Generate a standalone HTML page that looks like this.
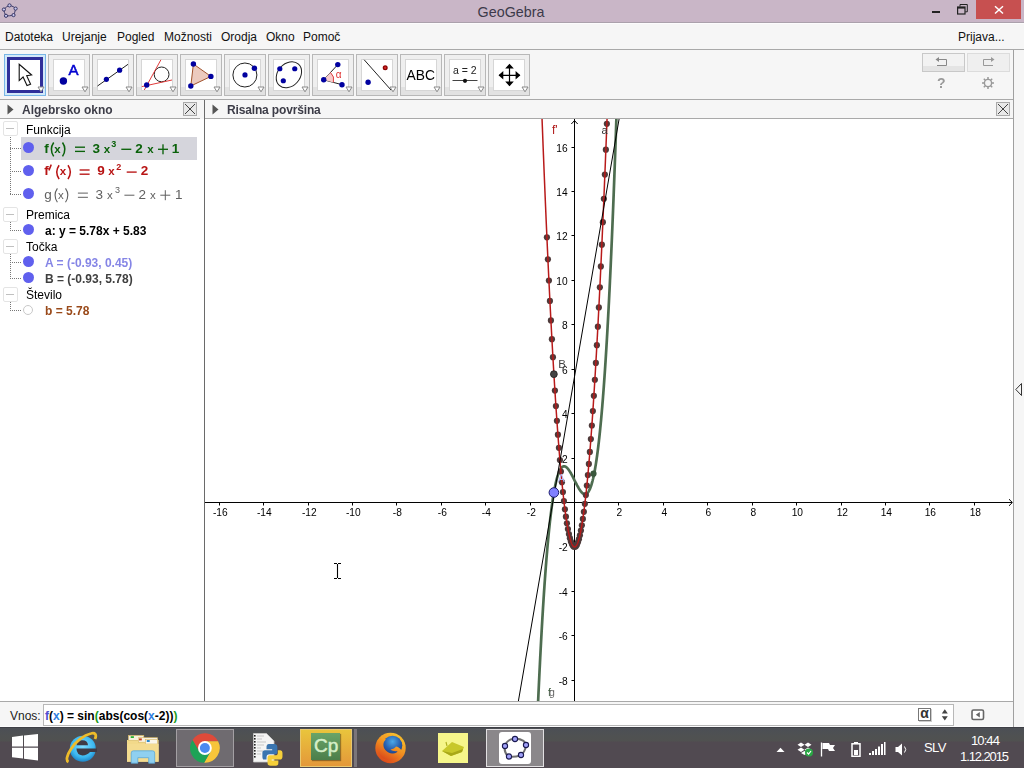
<!DOCTYPE html>
<html><head><meta charset="utf-8"><style>
html,body{margin:0;padding:0;width:1024px;height:768px;overflow:hidden;background:#f6f6f6;font-family:"Liberation Sans",sans-serif;}
div{box-sizing:content-box}
.a{position:absolute}
</style></head><body><div style="position:absolute;left:0;top:0;width:1024px;height:768px;overflow:hidden;opacity:0.999">
<!-- title bar -->
<div class="a" style="left:0;top:0;width:1024px;height:22px;background:#c9b6c7"></div>
<svg class="a" style="left:0;top:0" width="20" height="20"><path d="M9.5,5.4 C12,6 14.5,7 15.6,8.6 C15.2,11 14.5,13.5 13.5,15.1 C11,15.8 8,16 6,15.8 C4.8,14 4,11.5 3.9,9.5 C5.5,7.5 7.5,6 9.5,5.4 Z" fill="none" stroke="#3a3a6a" stroke-width="1"/><g fill="#c8c8f0" stroke="#2a2a5a" stroke-width="0.9"><circle cx="9.5" cy="5.4" r="1.6"/><circle cx="15.6" cy="8.6" r="1.6"/><circle cx="13.5" cy="15.1" r="1.6"/><circle cx="6" cy="15.8" r="1.6"/><circle cx="3.9" cy="9.5" r="1.6"/></g></svg>
<div class="a" style="left:-1px;top:4px;width:1024px;text-align:center;font-size:14.3px;color:#3c3a4a">GeoGebra</div>
<div class="a" style="left:932px;top:11px;width:8px;height:2px;background:#222"></div>
<svg class="a" style="left:957px;top:4px" width="11" height="11"><path d="M3,2.5 V0.5 H10.3 V7.8 H8.3" fill="none" stroke="#222" stroke-width="1"/><rect x="0.6" y="3" width="7.4" height="7" fill="none" stroke="#222" stroke-width="1.2"/><rect x="0.6" y="3" width="7.4" height="1.6" fill="#222"/></svg>
<div class="a" style="left:976px;top:0;width:45px;height:19px;background:#c75050"></div>
<svg class="a" style="left:994px;top:5px" width="10" height="10"><path d="M1,1.2 L9,8.5 M9,1.2 L1,8.5" stroke="#fff" stroke-width="1.5"/></svg>
<!-- menu -->
<div class="a" style="left:0;top:22px;width:1024px;height:27px;background:#f6f6f6"></div><div class="a" style="left:0;top:22px;width:1024px;height:1px;background:#aba1ac"></div><div class="a" style="left:0;top:23px;width:1024px;height:1px;background:#fdfcfd"></div>
<div class="a" style="left:0;top:49px;width:1024px;height:1px;background:#a9a9a9"></div>
<div class="a" style="left:5px;top:30px;font-size:12px;color:#111;white-space:nowrap;word-spacing:0">
<span class="a" style="left:0">Datoteka</span><span class="a" style="left:57px">Urejanje</span><span class="a" style="left:112px">Pogled</span><span class="a" style="left:159px">Možnosti</span><span class="a" style="left:216px">Orodja</span><span class="a" style="left:261px">Okno</span><span class="a" style="left:298px">Pomoč</span></div>
<div class="a" style="left:958px;top:30px;font-size:12px;color:#111">Prijava...</div>
<!-- toolbar -->
<div style="position:absolute;left:4px;top:54px;width:40px;height:40px;border:1px solid #78b6e6;background:#d2e9f9"></div>
<div style="position:absolute;left:7px;top:57px;width:30px;height:30px;border:3px solid #2f2f9a;background:#fff"></div>
<svg style="position:absolute;left:9px;top:59px" width="32" height="32"><path d="M10.2,5.3 L10.2,21.6 L14.1,18 L18,26.5 L21.6,25.2 L17.7,16.7 L22.6,16 Z" fill="#fff" stroke="#111" stroke-width="1.1" stroke-linejoin="miter"/></svg><svg style="position:absolute;left:37px;top:86px" width="8" height="7"><path d="M1,1 H7 L4,5.8 Z" fill="#fff" stroke="#8a8a8a" stroke-width="1"/></svg><div style="position:absolute;left:48px;top:54px;width:40px;height:40px;border:1px solid #b8b8b8;background:linear-gradient(#efefef 0,#efefef 32px,#e2e2e2 32px)"></div>
<div style="position:absolute;left:53px;top:59px;width:30px;height:30px;border:1px solid #d6d6d6;background:#fff"></div>
<svg style="position:absolute;left:53px;top:59px" width="32" height="32"><circle cx="10.4" cy="22" r="3.7" fill="#0000a0"/><text x="15.6" y="16" font-family="Liberation Sans" font-size="15" fill="#0000d0" stroke="#0000d0" stroke-width="0.55">A</text></svg><svg style="position:absolute;left:81px;top:86px" width="8" height="7"><path d="M1,1 H7 L4,5.8 Z" fill="#fff" stroke="#8a8a8a" stroke-width="1"/></svg><div style="position:absolute;left:92px;top:54px;width:40px;height:40px;border:1px solid #b8b8b8;background:linear-gradient(#efefef 0,#efefef 32px,#e2e2e2 32px)"></div>
<div style="position:absolute;left:97px;top:59px;width:30px;height:30px;border:1px solid #d6d6d6;background:#fff"></div>
<svg style="position:absolute;left:97px;top:59px" width="32" height="32"><path d="M0.5,27 L31,5.3" stroke="#222" stroke-width="1"/><circle cx="9.4" cy="20.3" r="2.6" fill="#0000a0"/><circle cx="22.6" cy="11.2" r="2.6" fill="#0000a0"/></svg><svg style="position:absolute;left:125px;top:86px" width="8" height="7"><path d="M1,1 H7 L4,5.8 Z" fill="#fff" stroke="#8a8a8a" stroke-width="1"/></svg><div style="position:absolute;left:136px;top:54px;width:40px;height:40px;border:1px solid #b8b8b8;background:linear-gradient(#efefef 0,#efefef 32px,#e2e2e2 32px)"></div>
<div style="position:absolute;left:141px;top:59px;width:30px;height:30px;border:1px solid #d6d6d6;background:#fff"></div>
<svg style="position:absolute;left:141px;top:59px" width="32" height="32"><circle cx="20.6" cy="15.4" r="7.4" fill="none" stroke="#222" stroke-width="1"/><path d="M3.3,31 L19.9,0.8" stroke="#e03a3a" stroke-width="1"/><path d="M0.8,27.6 L31,21" stroke="#e03a3a" stroke-width="1"/><circle cx="5.7" cy="26" r="2.7" fill="#0000a0"/></svg><svg style="position:absolute;left:169px;top:86px" width="8" height="7"><path d="M1,1 H7 L4,5.8 Z" fill="#fff" stroke="#8a8a8a" stroke-width="1"/></svg><div style="position:absolute;left:180px;top:54px;width:40px;height:40px;border:1px solid #b8b8b8;background:linear-gradient(#efefef 0,#efefef 32px,#e2e2e2 32px)"></div>
<div style="position:absolute;left:185px;top:59px;width:30px;height:30px;border:1px solid #d6d6d6;background:#fff"></div>
<svg style="position:absolute;left:185px;top:59px" width="32" height="32"><path d="M8.4,5 L25.9,17.4 L5.8,27 Z" fill="#eccabe" stroke="#a0522d" stroke-width="1"/><circle cx="8.4" cy="5" r="2.7" fill="#0000a0"/><circle cx="25.9" cy="17.4" r="2.7" fill="#0000a0"/><circle cx="5.8" cy="27" r="2.7" fill="#0000a0"/></svg><svg style="position:absolute;left:213px;top:86px" width="8" height="7"><path d="M1,1 H7 L4,5.8 Z" fill="#fff" stroke="#8a8a8a" stroke-width="1"/></svg><div style="position:absolute;left:224px;top:54px;width:40px;height:40px;border:1px solid #b8b8b8;background:linear-gradient(#efefef 0,#efefef 32px,#e2e2e2 32px)"></div>
<div style="position:absolute;left:229px;top:59px;width:30px;height:30px;border:1px solid #d6d6d6;background:#fff"></div>
<svg style="position:absolute;left:229px;top:59px" width="32" height="32"><circle cx="15.9" cy="16" r="12" fill="none" stroke="#222" stroke-width="1"/><circle cx="16" cy="15.9" r="2.6" fill="#0000a0"/><circle cx="25.4" cy="9.3" r="2.7" fill="#0000a0"/></svg><svg style="position:absolute;left:257px;top:86px" width="8" height="7"><path d="M1,1 H7 L4,5.8 Z" fill="#fff" stroke="#8a8a8a" stroke-width="1"/></svg><div style="position:absolute;left:268px;top:54px;width:40px;height:40px;border:1px solid #b8b8b8;background:linear-gradient(#efefef 0,#efefef 32px,#e2e2e2 32px)"></div>
<div style="position:absolute;left:273px;top:59px;width:30px;height:30px;border:1px solid #d6d6d6;background:#fff"></div>
<svg style="position:absolute;left:273px;top:59px" width="32" height="32"><ellipse cx="15.9" cy="15.75" rx="14.3" ry="11.2" transform="rotate(-48 15.9 15.75)" fill="none" stroke="#222" stroke-width="1"/><circle cx="6.8" cy="9.75" r="2.6" fill="#0000a0"/><circle cx="21.75" cy="9.75" r="2.6" fill="#0000a0"/><circle cx="10.3" cy="21.75" r="2.6" fill="#0000a0"/></svg><svg style="position:absolute;left:301px;top:86px" width="8" height="7"><path d="M1,1 H7 L4,5.8 Z" fill="#fff" stroke="#8a8a8a" stroke-width="1"/></svg><div style="position:absolute;left:312px;top:54px;width:40px;height:40px;border:1px solid #b8b8b8;background:linear-gradient(#efefef 0,#efefef 32px,#e2e2e2 32px)"></div>
<div style="position:absolute;left:317px;top:59px;width:30px;height:30px;border:1px solid #d6d6d6;background:#fff"></div>
<svg style="position:absolute;left:317px;top:59px" width="32" height="32"><path d="M6.7,20.8 L20.8,5.6" stroke="#222" stroke-width="1"/><path d="M6.7,20.8 L25,25.7" stroke="#222" stroke-width="1"/><path d="M6.7,20.8 L13.5,13.5 A10,10 0 0 1 16.4,23.4 Z" fill="#f8cccc"/><path d="M13.5,13.5 A10,10 0 0 1 16.4,23.4" fill="none" stroke="#e04040" stroke-width="1"/><text x="18.8" y="18.8" font-family="Liberation Sans" font-size="10" fill="#e03030">α</text><circle cx="6.7" cy="20.8" r="2.7" fill="#0000a0"/><circle cx="20.8" cy="5.6" r="2.7" fill="#0000a0"/><circle cx="25" cy="25.7" r="2.7" fill="#0000a0"/></svg><svg style="position:absolute;left:345px;top:86px" width="8" height="7"><path d="M1,1 H7 L4,5.8 Z" fill="#fff" stroke="#8a8a8a" stroke-width="1"/></svg><div style="position:absolute;left:356px;top:54px;width:40px;height:40px;border:1px solid #b8b8b8;background:linear-gradient(#efefef 0,#efefef 32px,#e2e2e2 32px)"></div>
<div style="position:absolute;left:361px;top:59px;width:30px;height:30px;border:1px solid #d6d6d6;background:#fff"></div>
<svg style="position:absolute;left:361px;top:59px" width="32" height="32"><path d="M3.2,0.8 L30,31" stroke="#222" stroke-width="1"/><circle cx="7.1" cy="23.2" r="2.7" fill="#0000a0"/><circle cx="24.2" cy="8.8" r="2.5" fill="#8b0000"/><circle cx="24.2" cy="8.8" r="1.2" fill="#d02828"/></svg><svg style="position:absolute;left:389px;top:86px" width="8" height="7"><path d="M1,1 H7 L4,5.8 Z" fill="#fff" stroke="#8a8a8a" stroke-width="1"/></svg><div style="position:absolute;left:400px;top:54px;width:40px;height:40px;border:1px solid #b8b8b8;background:linear-gradient(#efefef 0,#efefef 32px,#e2e2e2 32px)"></div>
<div style="position:absolute;left:405px;top:59px;width:30px;height:30px;border:1px solid #d6d6d6;background:#fff"></div>
<svg style="position:absolute;left:405px;top:59px" width="32" height="32"><text x="1.6" y="20.8" font-family="Liberation Sans" font-size="13.8" fill="#000">ABC</text></svg><svg style="position:absolute;left:433px;top:86px" width="8" height="7"><path d="M1,1 H7 L4,5.8 Z" fill="#fff" stroke="#8a8a8a" stroke-width="1"/></svg><div style="position:absolute;left:444px;top:54px;width:40px;height:40px;border:1px solid #b8b8b8;background:linear-gradient(#efefef 0,#efefef 32px,#e2e2e2 32px)"></div>
<div style="position:absolute;left:449px;top:59px;width:30px;height:30px;border:1px solid #d6d6d6;background:#fff"></div>
<svg style="position:absolute;left:449px;top:59px" width="32" height="32"><text x="4" y="15" font-family="Liberation Sans" font-size="10.5" fill="#222">a = 2</text><path d="M3.5,21.5 L28.5,21.5" stroke="#444" stroke-width="1"/><circle cx="16" cy="21.8" r="2.1" fill="#111"/></svg><svg style="position:absolute;left:477px;top:86px" width="8" height="7"><path d="M1,1 H7 L4,5.8 Z" fill="#fff" stroke="#8a8a8a" stroke-width="1"/></svg><div style="position:absolute;left:488px;top:54px;width:40px;height:40px;border:1px solid #b8b8b8;background:linear-gradient(#efefef 0,#efefef 32px,#e2e2e2 32px)"></div>
<div style="position:absolute;left:493px;top:59px;width:30px;height:30px;border:1px solid #d6d6d6;background:#fff"></div>
<svg style="position:absolute;left:493px;top:59px" width="32" height="32"><path d="M16.5,6 L16.5,26.5 M6,16.3 L27,16.3" stroke="#000" stroke-width="1.2"/><path d="M16.5,4.7 L12.2,9.5 L20.8,9.5 Z M16.5,27.3 L12.2,22.5 L20.8,22.5 Z M5.5,16.3 L10.3,12 L10.3,20.6 Z M27.4,16.3 L22.6,12 L22.6,20.6 Z" fill="#000"/></svg><svg style="position:absolute;left:521px;top:86px" width="8" height="7"><path d="M1,1 H7 L4,5.8 Z" fill="#fff" stroke="#8a8a8a" stroke-width="1"/></svg>
<div class="a" style="left:922px;top:53px;width:41px;height:17px;border:1px solid #c8c8c8;background:linear-gradient(#f2f2f2 0 12px,#e4e4e4 12px)"></div>
<div class="a" style="left:967px;top:53px;width:41px;height:17px;border:1px solid #dcdcdc;background:#efefef"></div>
<svg class="a" style="left:934px;top:57px" width="16" height="10"><path d="M4,2.5 H12.5 V8.5 H3" fill="none" stroke="#888" stroke-width="1"/><path d="M1.5,2.5 L5,0 L5,5 Z" fill="#888"/></svg>
<svg class="a" style="left:980px;top:57px" width="16" height="10"><path d="M12,2.5 H3.5 V8.5 H13" fill="none" stroke="#999" stroke-width="1"/><path d="M14.5,2.5 L11,0 L11,5 Z" fill="#999"/></svg>
<div class="a" style="left:937px;top:75px;font-size:14px;font-weight:bold;color:#999">?</div>
<svg class="a" style="left:981px;top:76px" width="14" height="14"><g stroke="#999" stroke-width="1.5"><path d="M7,1 V13 M1,7 H13 M2.8,2.8 L11.2,11.2 M11.2,2.8 L2.8,11.2"/></g><circle cx="7" cy="7" r="3.6" fill="#f5f5f5" stroke="#999" stroke-width="1.4"/></svg>
<div class="a" style="left:1013px;top:50px;width:1px;height:678px;background:#a0a0a0"></div>
<div class="a" style="left:0;top:99px;width:1013px;height:1px;background:#a9a9a9"></div>
<!-- algebra header -->
<div class="a" style="left:0;top:118px;width:200px;height:1px;background:#a9a9a9"></div>
<svg class="a" style="left:7px;top:104px" width="8" height="11"><path d="M0.5,0.5 L6.5,5.5 L0.5,10.5 Z" fill="#555"/></svg>
<div class="a" style="left:22px;top:103px;font-size:12px;font-weight:bold;color:#3d3d48">Algebrsko okno</div>
<div class="a" style="left:183px;top:102px;width:12px;height:12px;border:1px solid #aaa;background:#e8e8e8"></div>
<svg class="a" style="left:184px;top:103px" width="12" height="12"><path d="M1,1 L11,11 M11,1 L1,11" stroke="#444" stroke-width="1"/></svg>
<div class="a" style="left:0;top:119px;width:204px;height:582px;background:#fff"></div>
<div class="a" style="left:204px;top:100px;width:1px;height:601px;background:#6a6a6a"></div>
<!-- graph header -->
<div class="a" style="left:205px;top:118px;width:808px;height:1px;background:#a9a9a9"></div>
<svg class="a" style="left:212px;top:104px" width="8" height="11"><path d="M0.5,0.5 L6.5,5.5 L0.5,10.5 Z" fill="#555"/></svg>
<div class="a" style="left:227px;top:103px;font-size:12px;font-weight:bold;color:#3d3d48;letter-spacing:-0.15px">Risalna površina</div>
<div class="a" style="left:996px;top:102px;width:12px;height:12px;border:1px solid #aaa;background:#e8e8e8"></div>
<svg class="a" style="left:997px;top:103px" width="12" height="12"><path d="M1,1 L11,11 M11,1 L1,11" stroke="#444" stroke-width="1"/></svg>
<div class="a" style="left:205px;top:119px;width:808px;height:582px;background:#fff"></div>
<svg class="a" style="left:1015px;top:383px" width="8" height="13"><path d="M6.5,0.5 L0.8,6.5 L6.5,12.5 Z" fill="none" stroke="#333" stroke-width="1"/></svg>
<div style="position:absolute;left:21px;top:137px;width:176px;height:23px;background:#d5d5dc"></div><div style="position:absolute;left:3px;top:121px;width:13px;height:13px;border:1px solid #e4e4e4;border-radius:2px;background:#fff"></div><div style="position:absolute;left:6px;top:128px;width:8px;height:1px;background:#c0c0c0"></div><div style="position:absolute;left:26px;top:123px;font-size:12px;line-height:14px;white-space:nowrap;">Funkcija</div><div style="position:absolute;left:10px;top:137px;width:1px;height:58px;background:repeating-linear-gradient(#777 0 1px,transparent 1px 2px)"></div><div style="position:absolute;left:10px;top:148px;width:12px;height:1px;background:repeating-linear-gradient(90deg,#777 0 1px,transparent 1px 2px)"></div><div style="position:absolute;left:23px;top:142px;width:11px;height:11px;border-radius:50%;background:#6060ee"></div><div style="position:absolute;left:10px;top:171px;width:12px;height:1px;background:repeating-linear-gradient(90deg,#777 0 1px,transparent 1px 2px)"></div><div style="position:absolute;left:23px;top:165px;width:11px;height:11px;border-radius:50%;background:#6060ee"></div><div style="position:absolute;left:10px;top:194px;width:12px;height:1px;background:repeating-linear-gradient(90deg,#777 0 1px,transparent 1px 2px)"></div><div style="position:absolute;left:23px;top:188px;width:11px;height:11px;border-radius:50%;background:#6060ee"></div><svg style="position:absolute;left:0;top:0" width="200" height="210" font-family="Liberation Sans"><g fill="#0b620b"><text x="44.2" y="152.6" font-size="13.5" font-weight="bold">f</text><path transform="translate(49.2,142.2)" d="M4.5,0.3 Q-0.2,7 4.5,14.2" fill="none" stroke="#0b620b" stroke-width="1.5"/><text x="54.300000000000004" y="152.6" font-size="11.5" font-weight="bold">x</text><path transform="translate(62,142.2)" d="M0.5,0.3 Q5.2,7 0.5,14.2" fill="none" stroke="#0b620b" stroke-width="1.5"/><rect x="75" y="146.52" width="10" height="1.35"/><rect x="75" y="150.72" width="10" height="1.35"/><text x="92.6" y="152.6" font-size="13.5" font-weight="bold">3</text><text x="103.7" y="152.6" font-size="11.5" font-weight="bold">x</text><text x="111.2" y="146.79999999999998" font-size="9" font-weight="bold">3</text><rect x="121.3" y="148.62" width="10" height="1.35"/><text x="135.2" y="152.6" font-size="13.5" font-weight="bold">2</text><text x="147.29999999999998" y="152.6" font-size="11.5" font-weight="bold">x</text><rect x="158" y="148.62" width="10" height="1.35"/><rect x="162.32" y="144.29999999999998" width="1.35" height="10"/><text x="171.8" y="152.6" font-size="13.5" font-weight="bold">1</text></g><g fill="#b81414"><text x="44.2" y="175.4" font-size="13.5" font-weight="bold">f</text><path d="M51.0,165.20000000000002 L49.2,169.8" stroke="#b81414" stroke-width="1.6" stroke-linecap="round"/><path transform="translate(54.6,165.0)" d="M4.5,0.3 Q-0.2,7 4.5,14.2" fill="none" stroke="#b81414" stroke-width="1.5"/><text x="59.7" y="175.4" font-size="11.5" font-weight="bold">x</text><path transform="translate(67.5,165.0)" d="M0.5,0.3 Q5.2,7 0.5,14.2" fill="none" stroke="#b81414" stroke-width="1.5"/><rect x="79.6" y="169.32" width="10" height="1.35"/><rect x="79.6" y="173.52" width="10" height="1.35"/><text x="97.3" y="175.4" font-size="13.5" font-weight="bold">9</text><text x="108.3" y="175.4" font-size="11.5" font-weight="bold">x</text><text x="116.3" y="169.6" font-size="9" font-weight="bold">2</text><rect x="126.7" y="171.42" width="10" height="1.35"/><text x="140.7" y="175.4" font-size="13.5" font-weight="bold">2</text></g><g fill="#606060"><text x="44.2" y="198.5" font-size="13.5" font-weight="normal">g</text><path transform="translate(52.9,188.1)" d="M4.5,0.3 Q-0.2,7 4.5,14.2" fill="none" stroke="#606060" stroke-width="1.1"/><text x="58.0" y="198.5" font-size="11.5" font-weight="normal">x</text><path transform="translate(65,188.1)" d="M0.5,0.3 Q5.2,7 0.5,14.2" fill="none" stroke="#606060" stroke-width="1.1"/><rect x="77.9" y="192.60" width="10" height="1.0"/><rect x="77.9" y="196.80" width="10" height="1.0"/><text x="95.4" y="198.5" font-size="13.5" font-weight="normal">3</text><text x="106.9" y="198.5" font-size="11.5" font-weight="normal">x</text><text x="115" y="192.7" font-size="9" font-weight="normal">3</text><rect x="124.4" y="194.70" width="10" height="1.0"/><text x="138.4" y="198.5" font-size="13.5" font-weight="normal">2</text><text x="149.89999999999998" y="198.5" font-size="11.5" font-weight="normal">x</text><rect x="160.3" y="194.70" width="10" height="1.0"/><rect x="164.80" y="190.2" width="1.0" height="10"/><text x="175" y="198.5" font-size="13.5" font-weight="normal">1</text></g></svg><div style="position:absolute;left:3px;top:207px;width:13px;height:13px;border:1px solid #e4e4e4;border-radius:2px;background:#fff"></div><div style="position:absolute;left:6px;top:214px;width:8px;height:1px;background:#c0c0c0"></div><div style="position:absolute;left:26px;top:208px;font-size:12px;line-height:14px;white-space:nowrap;">Premica</div><div style="position:absolute;left:10px;top:222px;width:1px;height:9px;background:repeating-linear-gradient(#777 0 1px,transparent 1px 2px)"></div><div style="position:absolute;left:10px;top:230px;width:12px;height:1px;background:repeating-linear-gradient(90deg,#777 0 1px,transparent 1px 2px)"></div><div style="position:absolute;left:23px;top:224px;width:11px;height:11px;border-radius:50%;background:#6060ee"></div><div style="position:absolute;left:45px;top:224px;font-size:12px;line-height:14px;white-space:nowrap;font-weight:bold;color:#000">a: y = 5.78x + 5.83</div><div style="position:absolute;left:3px;top:239px;width:13px;height:13px;border:1px solid #e4e4e4;border-radius:2px;background:#fff"></div><div style="position:absolute;left:6px;top:246px;width:8px;height:1px;background:#c0c0c0"></div><div style="position:absolute;left:26px;top:240px;font-size:12px;line-height:14px;white-space:nowrap;">Točka</div><div style="position:absolute;left:10px;top:254px;width:1px;height:25px;background:repeating-linear-gradient(#777 0 1px,transparent 1px 2px)"></div><div style="position:absolute;left:10px;top:262px;width:12px;height:1px;background:repeating-linear-gradient(90deg,#777 0 1px,transparent 1px 2px)"></div><div style="position:absolute;left:23px;top:256px;width:11px;height:11px;border-radius:50%;background:#6060ee"></div><div style="position:absolute;left:10px;top:278px;width:12px;height:1px;background:repeating-linear-gradient(90deg,#777 0 1px,transparent 1px 2px)"></div><div style="position:absolute;left:23px;top:272px;width:11px;height:11px;border-radius:50%;background:#6060ee"></div><div style="position:absolute;left:45px;top:256px;font-size:12px;line-height:14px;white-space:nowrap;font-weight:bold;color:#8585e6">A = (-0.93, 0.45)</div><div style="position:absolute;left:45px;top:272px;font-size:12px;line-height:14px;white-space:nowrap;font-weight:bold;color:#404040">B = (-0.93, 5.78)</div><div style="position:absolute;left:3px;top:287px;width:13px;height:13px;border:1px solid #e4e4e4;border-radius:2px;background:#fff"></div><div style="position:absolute;left:6px;top:294px;width:8px;height:1px;background:#c0c0c0"></div><div style="position:absolute;left:26px;top:288px;font-size:12px;line-height:14px;white-space:nowrap;">Število</div><div style="position:absolute;left:10px;top:302px;width:1px;height:9px;background:repeating-linear-gradient(#777 0 1px,transparent 1px 2px)"></div><div style="position:absolute;left:10px;top:310px;width:12px;height:1px;background:repeating-linear-gradient(90deg,#777 0 1px,transparent 1px 2px)"></div><div style="position:absolute;left:23px;top:305px;width:10px;height:10px;border-radius:50%;border:1px solid #c8c8c8;background:#fff;box-sizing:border-box"></div><div style="position:absolute;left:45px;top:304px;font-size:12px;line-height:14px;white-space:nowrap;font-weight:bold;color:#9a4a1a">b = 5.78</div>
<svg width="1024" height="768" style="position:absolute;left:0;top:0">
<defs><clipPath id="gc"><rect x="205" y="119" width="808" height="582"/></clipPath></defs>
<g clip-path="url(#gc)">
<path d="M205,502.5 H1012" stroke="#000" stroke-width="1" fill="none"/><path d="M574.5,119 V701" stroke="#000" stroke-width="1" fill="none"/><path d="M571.3,124 L574.5,120.6 L577.7,124" stroke="#000" stroke-width="1" fill="none"/><path d="M1009,499.2 L1012.4,502.5 L1009,505.8" stroke="#000" stroke-width="1" fill="none"/><path d="M219.5,502.5 V505.5" stroke="#000" stroke-width="1"/><path d="M263.5,502.5 V505.5" stroke="#000" stroke-width="1"/><path d="M308.5,502.5 V505.5" stroke="#000" stroke-width="1"/><path d="M352.5,502.5 V505.5" stroke="#000" stroke-width="1"/><path d="M396.5,502.5 V505.5" stroke="#000" stroke-width="1"/><path d="M441.5,502.5 V505.5" stroke="#000" stroke-width="1"/><path d="M485.5,502.5 V505.5" stroke="#000" stroke-width="1"/><path d="M530.5,502.5 V505.5" stroke="#000" stroke-width="1"/><path d="M618.5,502.5 V505.5" stroke="#000" stroke-width="1"/><path d="M663.5,502.5 V505.5" stroke="#000" stroke-width="1"/><path d="M707.5,502.5 V505.5" stroke="#000" stroke-width="1"/><path d="M752.5,502.5 V505.5" stroke="#000" stroke-width="1"/><path d="M796.5,502.5 V505.5" stroke="#000" stroke-width="1"/><path d="M841.5,502.5 V505.5" stroke="#000" stroke-width="1"/><path d="M885.5,502.5 V505.5" stroke="#000" stroke-width="1"/><path d="M929.5,502.5 V505.5" stroke="#000" stroke-width="1"/><path d="M974.5,502.5 V505.5" stroke="#000" stroke-width="1"/><path d="M574.5,680.5 H571.5" stroke="#000" stroke-width="1"/><path d="M574.5,635.5 H571.5" stroke="#000" stroke-width="1"/><path d="M574.5,591.5 H571.5" stroke="#000" stroke-width="1"/><path d="M574.5,546.5 H571.5" stroke="#000" stroke-width="1"/><path d="M574.5,458.5 H571.5" stroke="#000" stroke-width="1"/><path d="M574.5,413.5 H571.5" stroke="#000" stroke-width="1"/><path d="M574.5,369.5 H571.5" stroke="#000" stroke-width="1"/><path d="M574.5,324.5 H571.5" stroke="#000" stroke-width="1"/><path d="M574.5,280.5 H571.5" stroke="#000" stroke-width="1"/><path d="M574.5,235.5 H571.5" stroke="#000" stroke-width="1"/><path d="M574.5,191.5 H571.5" stroke="#000" stroke-width="1"/><path d="M574.5,147.5 H571.5" stroke="#000" stroke-width="1"/>
<g font-family="Liberation Sans" font-size="10.2" fill="#000"><text x="220.3" y="516.0" text-anchor="middle">-16</text><text x="264.3" y="516.0" text-anchor="middle">-14</text><text x="309.3" y="516.0" text-anchor="middle">-12</text><text x="353.3" y="516.0" text-anchor="middle">-10</text><text x="397.3" y="516.0" text-anchor="middle">-8</text><text x="442.3" y="516.0" text-anchor="middle">-6</text><text x="486.3" y="516.0" text-anchor="middle">-4</text><text x="531.3" y="516.0" text-anchor="middle">-2</text><text x="619.3" y="516.0" text-anchor="middle">2</text><text x="664.3" y="516.0" text-anchor="middle">4</text><text x="708.3" y="516.0" text-anchor="middle">6</text><text x="753.3" y="516.0" text-anchor="middle">8</text><text x="797.3" y="516.0" text-anchor="middle">10</text><text x="842.3" y="516.0" text-anchor="middle">12</text><text x="886.3" y="516.0" text-anchor="middle">14</text><text x="930.3" y="516.0" text-anchor="middle">16</text><text x="975.3" y="516.0" text-anchor="middle">18</text><text x="567.7" y="684.8" text-anchor="end">-8</text><text x="567.7" y="639.8" text-anchor="end">-6</text><text x="567.7" y="595.8" text-anchor="end">-4</text><text x="567.7" y="550.8" text-anchor="end">-2</text><text x="567.7" y="462.8" text-anchor="end">2</text><text x="567.7" y="417.8" text-anchor="end">4</text><text x="567.7" y="373.8" text-anchor="end">6</text><text x="567.7" y="328.8" text-anchor="end">8</text><text x="567.7" y="284.8" text-anchor="end">10</text><text x="567.7" y="239.8" text-anchor="end">12</text><text x="567.7" y="195.8" text-anchor="end">14</text><text x="567.7" y="151.8" text-anchor="end">16</text></g>
<path d="M536.07,749.82 L536.19,746.78 L536.32,743.75 L536.44,740.75 L536.56,737.77 L536.68,734.80 L536.80,731.86 L536.93,728.94 L537.05,726.04 L537.17,723.16 L537.29,720.30 L537.41,717.46 L537.54,714.64 L537.66,711.84 L537.78,709.07 L537.90,706.31 L538.03,703.57 L538.15,700.85 L538.27,698.15 L538.39,695.47 L538.51,692.81 L538.64,690.17 L538.76,687.55 L538.88,684.95 L539.00,682.37 L539.13,679.81 L539.25,677.26 L539.37,674.74 L539.49,672.23 L539.61,669.75 L539.74,667.28 L539.86,664.84 L539.98,662.41 L540.10,660.00 L540.22,657.61 L540.35,655.23 L540.47,652.88 L540.59,650.54 L540.71,648.23 L540.84,645.93 L540.96,643.65 L541.08,641.39 L541.20,639.14 L541.32,636.92 L541.45,634.71 L541.57,632.52 L541.69,630.35 L541.81,628.20 L541.93,626.06 L542.06,623.95 L542.18,621.85 L542.30,619.76 L542.42,617.70 L542.55,615.65 L542.67,613.62 L542.79,611.61 L542.91,609.61 L543.03,607.64 L543.16,605.68 L543.28,603.73 L543.40,601.80 L543.52,599.90 L543.64,598.00 L543.77,596.13 L543.89,594.27 L544.01,592.42 L544.13,590.60 L544.26,588.79 L544.38,587.00 L544.50,585.22 L544.62,583.46 L544.74,581.72 L544.87,579.99 L544.99,578.28 L545.11,576.58 L545.23,574.90 L545.35,573.24 L545.48,571.59 L545.60,569.96 L545.72,568.34 L545.84,566.74 L545.97,565.16 L546.09,563.59 L546.21,562.04 L546.33,560.50 L546.45,558.98 L546.58,557.47 L546.70,555.98 L546.82,554.50 L546.94,553.04 L547.07,551.59 L547.19,550.16 L547.31,548.74 L547.43,547.34 L547.55,545.95 L547.68,544.58 L547.80,543.22 L547.92,541.88 L548.04,540.55 L548.16,539.24 L548.29,537.94 L548.41,536.65 L548.53,535.38 L548.65,534.12 L548.78,532.88 L548.90,531.65 L549.02,530.43 L549.14,529.23 L549.26,528.04 L549.39,526.87 L549.51,525.71 L549.63,524.56 L549.75,523.43 L549.87,522.31 L550.00,521.21 L550.12,520.11 L550.24,519.03 L550.36,517.97 L550.49,516.91 L550.61,515.87 L550.73,514.85 L550.85,513.83 L550.97,512.83 L551.10,511.84 L551.22,510.87 L551.34,509.91 L551.46,508.96 L551.58,508.02 L551.71,507.09 L551.83,506.18 L551.95,505.28 L552.07,504.39 L552.20,503.52 L552.32,502.66 L552.44,501.80 L552.56,500.97 L552.68,500.14 L552.81,499.32 L552.93,498.52 L553.05,497.73 L553.17,496.95 L553.30,496.18 L553.42,495.42 L553.54,494.68 L553.66,493.94 L553.78,493.22 L553.91,492.51 L554.03,491.81 L554.15,491.12 L554.27,490.44 L554.39,489.78 L554.52,489.12 L554.64,488.48 L554.76,487.84 L554.88,487.22 L555.01,486.61 L555.13,486.01 L555.25,485.41 L555.37,484.83 L555.49,484.26 L555.62,483.70 L555.74,483.15 L555.86,482.61 L555.98,482.09 L556.10,481.57 L556.23,481.06 L556.35,480.56 L556.47,480.07 L556.59,479.59 L556.72,479.12 L556.84,478.66 L556.96,478.21 L557.08,477.77 L557.20,477.34 L557.33,476.92 L557.45,476.51 L557.57,476.10 L557.69,475.71 L557.81,475.32 L557.94,474.95 L558.06,474.58 L558.18,474.23 L558.30,473.88 L558.43,473.54 L558.55,473.21 L558.67,472.88 L558.79,472.57 L558.91,472.27 L559.04,471.97 L559.16,471.68 L559.28,471.40 L559.40,471.13 L559.52,470.87 L559.65,470.61 L559.77,470.37 L559.89,470.13 L560.01,469.90 L560.14,469.68 L560.26,469.46 L560.38,469.25 L560.50,469.05 L560.62,468.86 L560.75,468.68 L560.87,468.50 L560.99,468.33 L561.11,468.17 L561.24,468.02 L561.36,467.87 L561.48,467.73 L561.60,467.60 L561.72,467.47 L561.85,467.35 L561.97,467.24 L562.09,467.13 L562.21,467.04 L562.33,466.94 L562.46,466.86 L562.58,466.78 L562.70,466.71 L562.82,466.64 L562.95,466.59 L563.07,466.53 L563.19,466.49 L563.31,466.45 L563.43,466.41 L563.56,466.38 L563.68,466.36 L563.80,466.35 L563.92,466.33 L564.04,466.33 L564.17,466.33 L564.29,466.34 L564.41,466.35 L564.53,466.37 L564.66,466.39 L564.78,466.42 L564.90,466.46 L565.02,466.49 L565.14,466.54 L565.27,466.59 L565.39,466.64 L565.51,466.70 L565.63,466.77 L565.75,466.84 L565.88,466.91 L566.00,466.99 L566.12,467.07 L566.24,467.16 L566.37,467.26 L566.49,467.35 L566.61,467.45 L566.73,467.56 L566.85,467.67 L566.98,467.78 L567.10,467.90 L567.22,468.03 L567.34,468.15 L567.47,468.28 L567.59,468.42 L567.71,468.56 L567.83,468.70 L567.95,468.84 L568.08,468.99 L568.20,469.14 L568.32,469.30 L568.44,469.46 L568.56,469.62 L568.69,469.79 L568.81,469.96 L568.93,470.13 L569.05,470.31 L569.18,470.48 L569.30,470.67 L569.42,470.85 L569.54,471.04 L569.66,471.23 L569.79,471.42 L569.91,471.61 L570.03,471.81 L570.15,472.01 L570.27,472.21 L570.40,472.42 L570.52,472.63 L570.64,472.84 L570.76,473.05 L570.89,473.26 L571.01,473.48 L571.13,473.69 L571.25,473.91 L571.37,474.13 L571.50,474.36 L571.62,474.58 L571.74,474.81 L571.86,475.03 L571.98,475.26 L572.11,475.49 L572.23,475.72 L572.35,475.96 L572.47,476.19 L572.60,476.43 L572.72,476.66 L572.84,476.90 L572.96,477.14 L573.08,477.38 L573.21,477.62 L573.33,477.86 L573.45,478.10 L573.57,478.34 L573.69,478.58 L573.82,478.83 L573.94,479.07 L574.06,479.31 L574.18,479.56 L574.31,479.80 L574.43,480.05 L574.55,480.29 L574.67,480.53 L574.79,480.78 L574.92,481.02 L575.04,481.27 L575.16,481.51 L575.28,481.75 L575.41,482.00 L575.53,482.24 L575.65,482.48 L575.77,482.72 L575.89,482.96 L576.02,483.20 L576.14,483.44 L576.26,483.68 L576.38,483.92 L576.50,484.15 L576.63,484.39 L576.75,484.62 L576.87,484.86 L576.99,485.09 L577.12,485.32 L577.24,485.55 L577.36,485.77 L577.48,486.00 L577.60,486.22 L577.73,486.45 L577.85,486.67 L577.97,486.89 L578.09,487.10 L578.21,487.32 L578.34,487.53 L578.46,487.74 L578.58,487.95 L578.70,488.16 L578.83,488.37 L578.95,488.57 L579.07,488.77 L579.19,488.97 L579.31,489.16 L579.44,489.35 L579.56,489.54 L579.68,489.73 L579.80,489.91 L579.92,490.10 L580.05,490.27 L580.17,490.45 L580.29,490.62 L580.41,490.79 L580.54,490.96 L580.66,491.12 L580.78,491.28 L580.90,491.44 L581.02,491.59 L581.15,491.74 L581.27,491.88 L581.39,492.02 L581.51,492.16 L581.63,492.30 L581.76,492.43 L581.88,492.55 L582.00,492.68 L582.12,492.80 L582.25,492.91 L582.37,493.02 L582.49,493.13 L582.61,493.23 L582.73,493.32 L582.86,493.42 L582.98,493.51 L583.10,493.59 L583.22,493.67 L583.35,493.74 L583.47,493.81 L583.59,493.88 L583.71,493.94 L583.83,493.99 L583.96,494.04 L584.08,494.09 L584.20,494.12 L584.32,494.16 L584.44,494.19 L584.57,494.21 L584.69,494.23 L584.81,494.24 L584.93,494.25 L585.06,494.25 L585.18,494.25 L585.30,494.23 L585.42,494.22 L585.54,494.20 L585.67,494.17 L585.79,494.13 L585.91,494.09 L586.03,494.05 L586.15,493.99 L586.28,493.94 L586.40,493.87 L586.52,493.80 L586.64,493.72 L586.77,493.64 L586.89,493.54 L587.01,493.45 L587.13,493.34 L587.25,493.23 L587.38,493.11 L587.50,492.98 L587.62,492.85 L587.74,492.71 L587.86,492.56 L587.99,492.41 L588.11,492.25 L588.23,492.08 L588.35,491.90 L588.48,491.72 L588.60,491.53 L588.72,491.33 L588.84,491.12 L588.96,490.90 L589.09,490.68 L589.21,490.45 L589.33,490.21 L589.45,489.97 L589.58,489.71 L589.70,489.45 L589.82,489.18 L589.94,488.90 L590.06,488.61 L590.19,488.31 L590.31,488.01 L590.43,487.70 L590.55,487.37 L590.67,487.04 L590.80,486.70 L590.92,486.35 L591.04,486.00 L591.16,485.63 L591.29,485.26 L591.41,484.87 L591.53,484.48 L591.65,484.07 L591.77,483.66 L591.90,483.24 L592.02,482.81 L592.14,482.37 L592.26,481.92 L592.38,481.46 L592.51,480.99 L592.63,480.51 L592.75,480.02 L592.87,479.52 L593.00,479.01 L593.12,478.49 L593.24,477.97 L593.36,477.43 L593.48,476.88 L593.61,476.32 L593.73,475.75 L593.85,475.17 L593.97,474.57 L594.09,473.97 L594.22,473.36 L594.34,472.74 L594.46,472.10 L594.58,471.46 L594.71,470.80 L594.83,470.14 L594.95,469.46 L595.07,468.77 L595.19,468.07 L595.32,467.36 L595.44,466.64 L595.56,465.90 L595.68,465.16 L595.80,464.40 L595.93,463.63 L596.05,462.85 L596.17,462.06 L596.29,461.26 L596.42,460.44 L596.54,459.61 L596.66,458.78 L596.78,457.92 L596.90,457.06 L597.03,456.19 L597.15,455.30 L597.27,454.40 L597.39,453.49 L597.52,452.56 L597.64,451.62 L597.76,450.67 L597.88,449.71 L598.00,448.74 L598.13,447.75 L598.25,446.75 L598.37,445.73 L598.49,444.71 L598.61,443.67 L598.74,442.61 L598.86,441.55 L598.98,440.47 L599.10,439.37 L599.23,438.27 L599.35,437.15 L599.47,436.02 L599.59,434.87 L599.71,433.71 L599.84,432.54 L599.96,431.35 L600.08,430.15 L600.20,428.93 L600.32,427.70 L600.45,426.46 L600.57,425.20 L600.69,423.93 L600.81,422.64 L600.94,421.34 L601.06,420.03 L601.18,418.70 L601.30,417.36 L601.42,416.00 L601.55,414.63 L601.67,413.24 L601.79,411.84 L601.91,410.42 L602.03,408.99 L602.16,407.54 L602.28,406.08 L602.40,404.60 L602.52,403.11 L602.65,401.60 L602.77,400.08 L602.89,398.54 L603.01,396.99 L603.13,395.42 L603.26,393.84 L603.38,392.24 L603.50,390.62 L603.62,388.99 L603.75,387.34 L603.87,385.68 L603.99,384.00 L604.11,382.30 L604.23,380.59 L604.36,378.86 L604.48,377.12 L604.60,375.36 L604.72,373.58 L604.84,371.79 L604.97,369.98 L605.09,368.16 L605.21,366.31 L605.33,364.45 L605.46,362.58 L605.58,360.68 L605.70,358.78 L605.82,356.85 L605.94,354.90 L606.07,352.94 L606.19,350.97 L606.31,348.97 L606.43,346.96 L606.55,344.93 L606.68,342.88 L606.80,340.82 L606.92,338.73 L607.04,336.63 L607.17,334.52 L607.29,332.38 L607.41,330.23 L607.53,328.06 L607.65,325.87 L607.78,323.66 L607.90,321.44 L608.02,319.19 L608.14,316.93 L608.26,314.65 L608.39,312.35 L608.51,310.04 L608.63,307.70 L608.75,305.35 L608.88,302.97 L609.00,300.58 L609.12,298.17 L609.24,295.74 L609.36,293.30 L609.49,290.83 L609.61,288.35 L609.73,285.84 L609.85,283.32 L609.97,280.77 L610.10,278.21 L610.22,275.63 L610.34,273.03 L610.46,270.41 L610.59,267.77 L610.71,265.11 L610.83,262.43 L610.95,259.73 L611.07,257.01 L611.20,254.27 L611.32,251.51 L611.44,248.74 L611.56,245.94 L611.69,243.12 L611.81,240.28 L611.93,237.42 L612.05,234.54 L612.17,231.64 L612.30,228.72 L612.42,225.78 L612.54,222.81 L612.66,219.83 L612.78,216.83 L612.91,213.80 L613.03,210.76 L613.15,207.69 L613.27,204.61 L613.40,201.50 L613.52,198.37 L613.64,195.22 L613.76,192.05 L613.88,188.85 L614.01,185.64 L614.13,182.40 L614.25,179.14 L614.37,175.86 L614.49,172.56 L614.62,169.24 L614.74,165.90 L614.86,162.53 L614.98,159.14 L615.11,155.73 L615.23,152.30 L615.35,148.84 L615.47,145.37 L615.59,141.87 L615.72,138.35 L615.84,134.80 L615.96,131.24 L616.08,127.65 L616.20,124.04 L616.33,120.40 L616.45,116.75 L616.57,113.07 L616.69,109.36 L616.82,105.64 L616.94,101.89 L617.06,98.12 L617.18,94.32 L617.30,90.50 L617.43,86.66 L617.55,82.80 L617.67,78.91 L617.79,75.00 L617.92,71.06" stroke="#4e6d50" stroke-width="2.7" fill="none" stroke-linecap="round"/><circle cx="593.5" cy="473.7" r="3.1" fill="#3a573c"/><g fill="#4e3a3a"><circle cx="546.91" cy="237.33" r="3.1"/><circle cx="547.91" cy="259.33" r="3.1"/><circle cx="548.91" cy="280.52" r="3.1"/><circle cx="549.91" cy="300.89" r="3.1"/><circle cx="550.91" cy="320.45" r="3.1"/><circle cx="551.91" cy="339.21" r="3.1"/><circle cx="552.91" cy="357.15" r="3.1"/><circle cx="553.91" cy="374.29" r="3.1"/><circle cx="554.91" cy="390.61" r="3.1"/><circle cx="555.91" cy="406.12" r="3.1"/><circle cx="556.91" cy="420.82" r="3.1"/><circle cx="557.91" cy="434.71" r="3.1"/><circle cx="558.91" cy="447.79" r="3.1"/><circle cx="559.91" cy="460.06" r="3.1"/><circle cx="560.91" cy="471.52" r="3.1"/><circle cx="561.91" cy="482.17" r="3.1"/><circle cx="562.91" cy="492.01" r="3.1"/><circle cx="563.91" cy="501.04" r="3.1"/><circle cx="564.91" cy="509.26" r="3.1"/><circle cx="565.91" cy="516.67" r="3.1"/><circle cx="566.91" cy="523.27" r="3.1"/><circle cx="567.91" cy="529.05" r="3.1"/><circle cx="568.91" cy="534.03" r="3.1"/><circle cx="569.91" cy="538.19" r="3.1"/><circle cx="570.91" cy="541.55" r="3.1"/><circle cx="571.91" cy="544.10" r="3.1"/><circle cx="572.91" cy="545.83" r="3.1"/><circle cx="573.91" cy="546.75" r="3.1"/><circle cx="574.91" cy="546.87" r="3.1"/><circle cx="575.91" cy="546.17" r="3.1"/><circle cx="576.91" cy="544.66" r="3.1"/><circle cx="577.91" cy="542.35" r="3.1"/><circle cx="578.91" cy="539.22" r="3.1"/><circle cx="579.91" cy="535.28" r="3.1"/><circle cx="580.91" cy="530.53" r="3.1"/><circle cx="581.86" cy="525.26" r="3.1"/><circle cx="582.86" cy="518.93" r="3.1"/><circle cx="583.86" cy="511.79" r="3.1"/><circle cx="584.86" cy="503.84" r="3.1"/><circle cx="585.86" cy="495.08" r="3.1"/><circle cx="586.86" cy="485.51" r="3.1"/><circle cx="587.86" cy="475.12" r="3.1"/><circle cx="588.86" cy="463.93" r="3.1"/><circle cx="589.86" cy="451.93" r="3.1"/><circle cx="590.86" cy="439.11" r="3.1"/><circle cx="591.86" cy="425.49" r="3.1"/><circle cx="592.86" cy="411.05" r="3.1"/><circle cx="593.86" cy="395.81" r="3.1"/><circle cx="594.86" cy="379.75" r="3.1"/><circle cx="595.86" cy="362.89" r="3.1"/><circle cx="596.86" cy="345.21" r="3.1"/><circle cx="597.86" cy="326.72" r="3.1"/><circle cx="598.86" cy="307.43" r="3.1"/><circle cx="599.86" cy="287.32" r="3.1"/><circle cx="600.86" cy="266.40" r="3.1"/><circle cx="601.86" cy="244.67" r="3.1"/><circle cx="602.86" cy="222.13" r="3.1"/><circle cx="603.86" cy="198.78" r="3.1"/><circle cx="604.86" cy="174.62" r="3.1"/><circle cx="605.86" cy="149.65" r="3.1"/><circle cx="606.86" cy="123.87" r="3.1"/></g><path d="M540.24,69.78 L540.35,72.86 L540.46,75.93 L540.57,79.00 L540.68,82.05 L540.79,85.09 L540.90,88.13 L541.01,91.15 L541.12,94.16 L541.23,97.17 L541.35,100.16 L541.46,103.14 L541.57,106.12 L541.68,109.08 L541.79,112.03 L541.90,114.98 L542.01,117.91 L542.12,120.83 L542.23,123.75 L542.35,126.65 L542.46,129.54 L542.57,132.43 L542.68,135.30 L542.79,138.16 L542.90,141.02 L543.01,143.86 L543.12,146.70 L543.23,149.52 L543.34,152.33 L543.46,155.14 L543.57,157.93 L543.68,160.71 L543.79,163.49 L543.90,166.25 L544.01,169.00 L544.12,171.75 L544.23,174.48 L544.34,177.20 L544.46,179.92 L544.57,182.62 L544.68,185.31 L544.79,188.00 L544.90,190.67 L545.01,193.33 L545.12,195.99 L545.23,198.63 L545.34,201.27 L545.45,203.89 L545.57,206.50 L545.68,209.11 L545.79,211.70 L545.90,214.28 L546.01,216.86 L546.12,219.42 L546.23,221.97 L546.34,224.52 L546.45,227.05 L546.57,229.57 L546.68,232.09 L546.79,234.59 L546.90,237.09 L547.01,239.57 L547.12,242.04 L547.23,244.51 L547.34,246.96 L547.45,249.40 L547.56,251.84 L547.68,254.26 L547.79,256.67 L547.90,259.08 L548.01,261.47 L548.12,263.86 L548.23,266.23 L548.34,268.59 L548.45,270.95 L548.56,273.29 L548.68,275.62 L548.79,277.95 L548.90,280.26 L549.01,282.57 L549.12,284.86 L549.23,287.14 L549.34,289.42 L549.45,291.68 L549.56,293.93 L549.67,296.18 L549.79,298.41 L549.90,300.64 L550.01,302.85 L550.12,305.05 L550.23,307.25 L550.34,309.43 L550.45,311.60 L550.56,313.77 L550.67,315.92 L550.79,318.07 L550.90,320.20 L551.01,322.32 L551.12,324.44 L551.23,326.54 L551.34,328.64 L551.45,330.72 L551.56,332.79 L551.67,334.86 L551.78,336.91 L551.90,338.95 L552.01,340.99 L552.12,343.01 L552.23,345.03 L552.34,347.03 L552.45,349.02 L552.56,351.01 L552.67,352.98 L552.78,354.95 L552.90,356.90 L553.01,358.84 L553.12,360.78 L553.23,362.70 L553.34,364.62 L553.45,366.52 L553.56,368.41 L553.67,370.30 L553.78,372.17 L553.89,374.04 L554.01,375.89 L554.12,377.73 L554.23,379.57 L554.34,381.39 L554.45,383.21 L554.56,385.01 L554.67,386.80 L554.78,388.59 L554.89,390.36 L555.01,392.13 L555.12,393.88 L555.23,395.62 L555.34,397.36 L555.45,399.08 L555.56,400.80 L555.67,402.50 L555.78,404.19 L555.89,405.88 L556.00,407.55 L556.12,409.22 L556.23,410.87 L556.34,412.51 L556.45,414.15 L556.56,415.77 L556.67,417.39 L556.78,418.99 L556.89,420.58 L557.00,422.17 L557.12,423.74 L557.23,425.31 L557.34,426.86 L557.45,428.41 L557.56,429.94 L557.67,431.46 L557.78,432.98 L557.89,434.48 L558.00,435.98 L558.11,437.46 L558.23,438.93 L558.34,440.40 L558.45,441.85 L558.56,443.30 L558.67,444.73 L558.78,446.16 L558.89,447.57 L559.00,448.97 L559.11,450.37 L559.23,451.75 L559.34,453.13 L559.45,454.49 L559.56,455.85 L559.67,457.19 L559.78,458.52 L559.89,459.85 L560.00,461.16 L560.11,462.47 L560.22,463.76 L560.34,465.05 L560.45,466.32 L560.56,467.58 L560.67,468.84 L560.78,470.08 L560.89,471.32 L561.00,472.54 L561.11,473.76 L561.22,474.96 L561.34,476.15 L561.45,477.34 L561.56,478.51 L561.67,479.68 L561.78,480.83 L561.89,481.98 L562.00,483.11 L562.11,484.23 L562.22,485.35 L562.33,486.45 L562.45,487.55 L562.56,488.63 L562.67,489.71 L562.78,490.77 L562.89,491.83 L563.00,492.87 L563.11,493.90 L563.22,494.93 L563.33,495.94 L563.44,496.95 L563.56,497.94 L563.67,498.93 L563.78,499.90 L563.89,500.87 L564.00,501.82 L564.11,502.76 L564.22,503.70 L564.33,504.62 L564.44,505.54 L564.56,506.44 L564.67,507.34 L564.78,508.22 L564.89,509.10 L565.00,509.96 L565.11,510.81 L565.22,511.66 L565.33,512.49 L565.44,513.32 L565.55,514.13 L565.67,514.94 L565.78,515.73 L565.89,516.52 L566.00,517.29 L566.11,518.06 L566.22,518.81 L566.33,519.56 L566.44,520.29 L566.55,521.01 L566.67,521.73 L566.78,522.43 L566.89,523.13 L567.00,523.81 L567.11,524.49 L567.22,525.15 L567.33,525.81 L567.44,526.45 L567.55,527.09 L567.66,527.71 L567.78,528.33 L567.89,528.93 L568.00,529.52 L568.11,530.11 L568.22,530.68 L568.33,531.25 L568.44,531.80 L568.55,532.35 L568.66,532.88 L568.78,533.41 L568.89,533.92 L569.00,534.43 L569.11,534.92 L569.22,535.41 L569.33,535.88 L569.44,536.35 L569.55,536.80 L569.66,537.25 L569.77,537.68 L569.89,538.10 L570.00,538.52 L570.11,538.92 L570.22,539.32 L570.33,539.70 L570.44,540.08 L570.55,540.44 L570.66,540.80 L570.77,541.14 L570.89,541.48 L571.00,541.80 L571.11,542.12 L571.22,542.42 L571.33,542.72 L571.44,543.00 L571.55,543.28 L571.66,543.54 L571.77,543.80 L571.88,544.04 L572.00,544.28 L572.11,544.50 L572.22,544.72 L572.33,544.92 L572.44,545.12 L572.55,545.30 L572.66,545.48 L572.77,545.64 L572.88,545.80 L573.00,545.94 L573.11,546.08 L573.22,546.20 L573.33,546.32 L573.44,546.42 L573.55,546.52 L573.66,546.60 L573.77,546.68 L573.88,546.74 L573.99,546.80 L574.11,546.84 L574.22,546.88 L574.33,546.90 L574.44,546.92 L574.55,546.92 L574.66,546.92 L574.77,546.90 L574.88,546.88 L574.99,546.84 L575.11,546.80 L575.22,546.74 L575.33,546.68 L575.44,546.60 L575.55,546.52 L575.66,546.42 L575.77,546.32 L575.88,546.20 L575.99,546.08 L576.10,545.94 L576.22,545.80 L576.33,545.64 L576.44,545.48 L576.55,545.30 L576.66,545.12 L576.77,544.92 L576.88,544.72 L576.99,544.50 L577.10,544.28 L577.22,544.04 L577.33,543.80 L577.44,543.54 L577.55,543.28 L577.66,543.00 L577.77,542.72 L577.88,542.42 L577.99,542.12 L578.10,541.80 L578.21,541.48 L578.33,541.14 L578.44,540.80 L578.55,540.44 L578.66,540.08 L578.77,539.70 L578.88,539.32 L578.99,538.92 L579.10,538.52 L579.21,538.10 L579.33,537.68 L579.44,537.25 L579.55,536.80 L579.66,536.35 L579.77,535.88 L579.88,535.41 L579.99,534.92 L580.10,534.43 L580.21,533.92 L580.32,533.41 L580.44,532.88 L580.55,532.35 L580.66,531.80 L580.77,531.25 L580.88,530.68 L580.99,530.11 L581.10,529.52 L581.21,528.93 L581.32,528.33 L581.44,527.71 L581.55,527.09 L581.66,526.45 L581.77,525.81 L581.88,525.15 L581.99,524.49 L582.10,523.81 L582.21,523.13 L582.32,522.43 L582.43,521.73 L582.55,521.01 L582.66,520.29 L582.77,519.56 L582.88,518.81 L582.99,518.06 L583.10,517.29 L583.21,516.52 L583.32,515.73 L583.43,514.94 L583.55,514.13 L583.66,513.32 L583.77,512.49 L583.88,511.66 L583.99,510.81 L584.10,509.96 L584.21,509.10 L584.32,508.22 L584.43,507.34 L584.54,506.44 L584.66,505.54 L584.77,504.62 L584.88,503.70 L584.99,502.76 L585.10,501.82 L585.21,500.87 L585.32,499.90 L585.43,498.93 L585.54,497.94 L585.65,496.95 L585.77,495.94 L585.88,494.93 L585.99,493.90 L586.10,492.87 L586.21,491.83 L586.32,490.77 L586.43,489.71 L586.54,488.63 L586.65,487.55 L586.77,486.45 L586.88,485.35 L586.99,484.23 L587.10,483.11 L587.21,481.98 L587.32,480.83 L587.43,479.68 L587.54,478.51 L587.65,477.34 L587.76,476.15 L587.88,474.96 L587.99,473.76 L588.10,472.54 L588.21,471.32 L588.32,470.08 L588.43,468.84 L588.54,467.58 L588.65,466.32 L588.76,465.05 L588.88,463.76 L588.99,462.47 L589.10,461.16 L589.21,459.85 L589.32,458.52 L589.43,457.19 L589.54,455.85 L589.65,454.49 L589.76,453.13 L589.87,451.75 L589.99,450.37 L590.10,448.97 L590.21,447.57 L590.32,446.16 L590.43,444.73 L590.54,443.30 L590.65,441.85 L590.76,440.40 L590.87,438.93 L590.99,437.46 L591.10,435.98 L591.21,434.48 L591.32,432.98 L591.43,431.46 L591.54,429.94 L591.65,428.41 L591.76,426.86 L591.87,425.31 L591.98,423.74 L592.10,422.17 L592.21,420.58 L592.32,418.99 L592.43,417.39 L592.54,415.77 L592.65,414.15 L592.76,412.51 L592.87,410.87 L592.98,409.22 L593.10,407.55 L593.21,405.88 L593.32,404.19 L593.43,402.50 L593.54,400.80 L593.65,399.08 L593.76,397.36 L593.87,395.62 L593.98,393.88 L594.09,392.13 L594.21,390.36 L594.32,388.59 L594.43,386.80 L594.54,385.01 L594.65,383.21 L594.76,381.39 L594.87,379.57 L594.98,377.73 L595.09,375.89 L595.21,374.04 L595.32,372.17 L595.43,370.30 L595.54,368.41 L595.65,366.52 L595.76,364.62 L595.87,362.70 L595.98,360.78 L596.09,358.84 L596.20,356.90 L596.32,354.95 L596.43,352.98 L596.54,351.01 L596.65,349.02 L596.76,347.03 L596.87,345.03 L596.98,343.01 L597.09,340.99 L597.20,338.95 L597.32,336.91 L597.43,334.86 L597.54,332.79 L597.65,330.72 L597.76,328.64 L597.87,326.54 L597.98,324.44 L598.09,322.32 L598.20,320.20 L598.31,318.07 L598.43,315.92 L598.54,313.77 L598.65,311.60 L598.76,309.43 L598.87,307.25 L598.98,305.05 L599.09,302.85 L599.20,300.64 L599.31,298.41 L599.43,296.18 L599.54,293.93 L599.65,291.68 L599.76,289.42 L599.87,287.14 L599.98,284.86 L600.09,282.57 L600.20,280.26 L600.31,277.95 L600.42,275.62 L600.54,273.29 L600.65,270.95 L600.76,268.59 L600.87,266.23 L600.98,263.86 L601.09,261.47 L601.20,259.08 L601.31,256.67 L601.42,254.26 L601.54,251.84 L601.65,249.40 L601.76,246.96 L601.87,244.51 L601.98,242.04 L602.09,239.57 L602.20,237.09 L602.31,234.59 L602.42,232.09 L602.53,229.57 L602.65,227.05 L602.76,224.52 L602.87,221.97 L602.98,219.42 L603.09,216.86 L603.20,214.28 L603.31,211.70 L603.42,209.11 L603.53,206.50 L603.65,203.89 L603.76,201.27 L603.87,198.63 L603.98,195.99 L604.09,193.33 L604.20,190.67 L604.31,188.00 L604.42,185.31 L604.53,182.62 L604.64,179.92 L604.76,177.20 L604.87,174.48 L604.98,171.75 L605.09,169.00 L605.20,166.25 L605.31,163.49 L605.42,160.71 L605.53,157.93 L605.64,155.14 L605.76,152.33 L605.87,149.52 L605.98,146.70 L606.09,143.86 L606.20,141.02 L606.31,138.16 L606.42,135.30 L606.53,132.43 L606.64,129.54 L606.75,126.65 L606.87,123.75 L606.98,120.83 L607.09,117.91 L607.20,114.98 L607.31,112.03 L607.42,109.08 L607.53,106.12 L607.64,103.14 L607.75,100.16 L607.87,97.17 L607.98,94.16 L608.09,91.15 L608.20,88.13 L608.31,85.09 L608.42,82.05 L608.53,79.00 L608.64,75.93 L608.75,72.86 L608.86,69.78" stroke="#b81a1a" stroke-width="1.5" fill="none"/><path d="M515.18,719.62 L621.79,103.43" stroke="#000" stroke-width="1" fill="none"/><text x="558" y="482" font-family="Liberation Sans" font-size="10" fill="#b0b0f0">A</text><circle cx="553.89" cy="374.13" r="3.4" fill="#444" stroke="#222" stroke-width="0.8"/><circle cx="553.89" cy="492.51" r="4.8" fill="#8080ff" stroke="#1c1c6c" stroke-width="1"/>
<text x="552" y="134" font-family="Liberation Sans" font-size="12" fill="#b01818">f'</text>
<text x="601.5" y="134" font-family="Liberation Sans" font-size="11" fill="#333">a</text>
<text x="558.3" y="368" font-family="Liberation Sans" font-size="11.5" fill="#444">B</text>
<text x="548" y="695.5" font-family="Liberation Sans" font-size="10.5" fill="#3a5a3a">f</text>
<text x="549" y="695.5" font-family="Liberation Sans" font-size="10.5" fill="#666">g</text>
</g></svg>
<svg class="a" style="left:333px;top:562px" width="9" height="18"><path d="M1,1.5 H4 M5,1.5 H8 M4.5,2 V16 M1,16.5 H4 M5,16.5 H8" stroke="#000" stroke-width="1.1" fill="none"/></svg>
<!-- input bar -->
<div class="a" style="left:0;top:701px;width:1013px;height:1px;background:#a9a9a9"></div>
<div class="a" style="left:0;top:702px;width:1013px;height:26px;background:#f6f6f6"></div>
<div class="a" style="left:10px;top:709px;font-size:12px;color:#222">Vnos:</div>
<div class="a" style="left:43px;top:704px;width:909px;height:20px;border:1px solid #b8b8b8;background:#fff"></div>
<div class="a" style="left:45px;top:709px;font-size:12px;font-weight:bold;color:#000;white-space:nowrap"><span style="color:#5050d0">f</span>(<span style="color:#3080e0">x</span>) = sin<span style="color:#1a9a1a">(</span>abs(cos(<span style="color:#3080e0">x</span>-2))<span style="color:#1a9a1a">)</span></div>
<div class="a" style="left:918px;top:708px;width:11px;height:11px;border:1px solid #777;background:#fff;box-shadow:1px 1px 0 #ccc"></div><div class="a" style="left:918px;top:705px;width:13px;text-align:center;font-size:14px;font-weight:bold;color:#333">α</div>
<svg class="a" style="left:941px;top:709px" width="8" height="12"><path d="M3.8,0.3 L6.8,4.6 H0.8 Z M3.8,11.5 L6.8,7.2 H0.8 Z" fill="#444"/></svg>
<svg class="a" style="left:971px;top:709px" width="14" height="12"><rect x="1" y="1" width="11.5" height="9.5" rx="1.5" fill="#fff" stroke="#666" stroke-width="1.6"/><path d="M8.8,3 L4.8,5.75 L8.8,8.5 Z" fill="#666"/></svg>
<!-- taskbar -->
<div class="a" style="left:0;top:726px;width:1013px;height:1px;background:#fcfcfc"></div><div class="a" style="left:0;top:727px;width:1024px;height:41px;background:linear-gradient(#3e3f46 0 1px,#4c4f55 1px,#4f5152 9px,#505150 14px,#514a51 15px)"></div>
<!-- windows logo -->
<svg class="a" style="left:11px;top:734px" width="28" height="27"><path d="M1,3 L12,1.6 V12.6 H1 Z M13,1.4 L27,0 V12.6 H13 Z M1,13.8 H12 V24.6 L1,23.2 Z M13,13.8 H27 V26.5 L13,24.8 Z" fill="#fff"/></svg>
<!-- IE -->
<svg class="a" style="left:64px;top:731px" width="34" height="34"><defs><radialGradient id="ieg" cx="0.5" cy="0.4" r="0.6"><stop offset="0" stop-color="#7fdcff"/><stop offset="0.7" stop-color="#3cb8f0"/><stop offset="1" stop-color="#1f86c8"/></radialGradient></defs><circle cx="18.8" cy="17.8" r="13" fill="url(#ieg)"/><path d="M12.6,14.3 Q13,9.2 18.3,9.2 Q23.7,9.2 24,14.3 Z" fill="#3f3b45"/><path d="M12.4,17.6 H33 V21 L26,21 Q23,24.4 18.5,24.4 Q12.8,24.2 12.4,17.6 Z" fill="#3f3b45"/><path d="M4.5,31 C1.5,29.5 3,24 7,18 C12,10 20,4 27,2.5 C31,1.5 33,3.5 31,8" fill="none" stroke="#eebc2a" stroke-width="2.8"/></svg>
<!-- explorer -->
<svg class="a" style="left:126px;top:734px" width="34" height="31"><rect x="1" y="6" width="31.6" height="21.7" fill="#f2d98a"/><rect x="2.4" y="1.4" width="15.4" height="5" fill="#f6f0dc" stroke="#d8b860" stroke-width="0.6"/><rect x="12.3" y="3.7" width="19.3" height="4.5" fill="#f8f2e0" stroke="#d8b860" stroke-width="0.6"/><rect x="19.3" y="5.4" width="12.3" height="4.6" fill="#faf6ea" stroke="#d8b860" stroke-width="0.6"/><rect x="4.7" y="2.2" width="3.2" height="1.8" fill="#2ab030"/><rect x="13" y="4.4" width="2.8" height="2" fill="#c84020"/><rect x="20.8" y="6" width="2.9" height="2" fill="#2c88c8"/><rect x="1" y="10" width="31.6" height="17.7" fill="#f4dc90"/><path d="M5.2,29.2 V19 Q5.2,16.8 7.5,16.8 H26.4 Q28.7,16.8 28.7,19 V29.2 H22.7 V23.7 H11.8 V29.2 Z" fill="#8fd0f0" stroke="#5aa8d8" stroke-width="0.8"/></svg>
<!-- chrome highlighted -->
<div class="a" style="left:176px;top:729px;width:56px;height:36px;border:1px solid #a39fa3;background:#6f6b70"></div>
<svg class="a" style="left:190px;top:733px" width="31" height="31"><path d="M14.90,8.30 L28.10,8.30 A14.8,14.8 0 0 0 2.50,6.92 L9.10,18.35 L14.90,15.00 Z" fill="#de4a3a"/><path d="M20.70,18.35 L14.10,29.78 A14.8,14.8 0 0 0 28.10,8.30 L14.90,8.30 L14.90,15.00 Z" fill="#f7c53a"/><path d="M9.10,18.35 L2.50,6.92 A14.8,14.8 0 0 0 14.10,29.78 L20.70,18.35 L14.90,15.00 Z" fill="#1ea356"/><circle cx="14.9" cy="15.0" r="6.9" fill="#fff"/><circle cx="14.9" cy="15.0" r="5" fill="#4a8af0"/></svg>
<!-- python file -->
<svg class="a" style="left:252px;top:732px" width="34" height="34"><path d="M1.5,1.5 H14.5 L22,9 V30 H1.5 Z" fill="#f4f4f4" stroke="#c8c8c8" stroke-width="0.8"/><g fill="#222"><rect x="2" y="3" width="1.6" height="1.6"/><rect x="2" y="6" width="1.6" height="1.6"/><rect x="2" y="9" width="1.6" height="1.6"/><rect x="2" y="12" width="1.6" height="1.6"/><rect x="2" y="15" width="1.6" height="1.6"/><rect x="2" y="18" width="1.6" height="1.6"/><rect x="2" y="21" width="1.6" height="1.6"/><rect x="2" y="24" width="1.6" height="1.6"/></g><g stroke="#bbb" stroke-width="0.8"><path d="M5,4 H12 M5,7 H10 M5,10 H14 M5,13 H12 M5,16 H9 M5,19 H11 M5,22 H9"/></g><g transform="translate(0.6,1.2) scale(1.03)"><path d="M15.5,10.5 H21 Q24,10.5 24,13.5 V18.5 Q24,20.5 22,20.5 H16.5 Q13.5,20.5 13.5,23.5 V25.5 H11 Q9.5,25.5 9.5,22.5 V19 Q9.5,16.5 12,16.5 H19 V15.5 H13.5 V13 Q13.5,10.5 15.5,10.5 Z" fill="#3a75b0"/><path d="M17.5,31.5 H22.5 Q25,31.5 25,29 V26.5 H18.5 V25.5 H26.5 Q29,25.5 29,22.5 V19 Q29,16.5 27,16.5 H24.5 V19 Q24.5,21.5 22,21.5 H16.5 Q14.5,21.5 14.5,23.5 V29 Q14.5,31.5 17.5,31.5 Z" fill="#f5cf3a"/></g></svg>
<!-- captivate -->
<div class="a" style="left:300px;top:729px;width:52px;height:38px;border:1px solid #e8c870;box-sizing:border-box;background:linear-gradient(#e9c43c,#e4983a)"></div>
<div class="a" style="left:311px;top:733px;width:29px;height:27px;background:linear-gradient(#6aa468,#4c7e4a);box-shadow:1px 1px 1px rgba(0,0,0,0.35)"></div>
<div class="a" style="left:314px;top:735px;font-size:19px;color:#d6efc8;letter-spacing:0px;-webkit-text-stroke:0.5px #d6efc8">Cp</div>
<div class="a" style="left:354px;top:729px;width:3px;height:38px;background:#7a757a"></div>
<!-- firefox -->
<svg class="a" style="left:374px;top:731px" width="33" height="34"><defs><radialGradient id="ffg" cx="0.5" cy="0.3" r="0.7"><stop offset="0" stop-color="#4aa8e8"/><stop offset="0.55" stop-color="#2a62b0"/><stop offset="1" stop-color="#1a3a80"/></radialGradient><linearGradient id="ffo" x1="0.8" y1="0" x2="0.2" y2="1"><stop offset="0" stop-color="#f8c830"/><stop offset="0.5" stop-color="#f08a20"/><stop offset="1" stop-color="#d8401a"/></linearGradient></defs><circle cx="16.5" cy="17" r="15.2" fill="url(#ffo)"/><circle cx="18.5" cy="14.5" r="9.8" fill="url(#ffg)"/><path d="M3,12 C4,8 6,6 8,4.5 C9,7 10,8 12,8.5 C10,10 9,12 9.5,15 C10,19 14,22 18,22.5 C21,23 23,21.5 23.5,20 C21,20.5 18,20 16.5,18.5 C19,18 21,17 22,15.5 C25,16 28,19 28.5,22 C26,27 21,29.5 16.5,29.5 C9,29.5 3.5,24 3,17 Z" fill="url(#ffo)"/><path d="M26,5 C29,8 31,12 31.5,16 C31,14 29,11 27,10 Z" fill="#f5b428"/></svg>
<!-- sticky notes -->
<div class="a" style="left:438px;top:733px;width:30px;height:30px;background:#f6f68a"></div>
<svg class="a" style="left:438px;top:733px" width="30" height="30"><path d="M4,18 L14,9 L26,14 L24,19 L13,23 Z" fill="#c8c82a"/><path d="M4,18 L13,23 L24,19 L25,16 L14,20 Z" fill="#a8a818"/><path d="M8,9 L9,13" stroke="#b0b020" stroke-width="1.2"/></svg>
<!-- geogebra highlighted -->
<div class="a" style="left:486px;top:729px;width:56px;height:36px;border:1px solid #e2e0e2;background:#8a878a"></div>
<div class="a" style="left:499px;top:732px;width:32px;height:32px;border-radius:3px;background:#fff"></div>
<svg class="a" style="left:499px;top:732px" width="32" height="32"><path d="M16,6.5 C22,7 27,9 27,13.5 C26.5,18 25,21 21,23.5 C17,25 12,25 9,24.5 C6,21 5,17 6,13.5 C7,10 11,7 16,6.5 Z" fill="none" stroke="#707070" stroke-width="2"/><g fill="#a0a0f8" stroke="#1a1a50" stroke-width="1.1"><circle cx="16" cy="7" r="2.6"/><circle cx="27" cy="13" r="2.6"/><circle cx="22" cy="23" r="2.6"/><circle cx="10" cy="24.5" r="2.6"/><circle cx="6" cy="14" r="2.6"/></g></svg>
<!-- tray -->
<svg class="a" style="left:776px;top:747px" width="9" height="6"><path d="M0.5,5 L4.5,0.8 L8.5,5 Z" fill="#fff"/></svg>
<svg class="a" style="left:797px;top:742px" width="17" height="15"><g fill="#fff"><path d="M4,0.5 L7.5,2.8 L4,5 L0.5,2.8 Z M11,0.5 L14.5,2.8 L11,5 L7.5,2.8 Z M4,5.5 L7.5,7.8 L4,10 L0.5,7.8 Z M11,5.5 L14.5,7.8 L11,10 L7.5,7.8 Z M7.5,9 L11,11 L7.5,13 L4,11 Z"/></g><circle cx="12" cy="10.5" r="4" fill="#2aa845"/><path d="M10,10.5 L11.6,12 L14,9" stroke="#fff" stroke-width="1.2" fill="none"/></svg>
<svg class="a" style="left:820px;top:742px" width="17" height="15"><path d="M1.5,0.5 V14.5" stroke="#fff" stroke-width="1.3"/><path d="M2.5,1 H9 L10,3 H15 L13,6 L15,9 H9 L8,7 H2.5 Z" fill="#fff"/></svg>
<svg class="a" style="left:851px;top:742px" width="10" height="15"><rect x="3" y="0" width="4" height="2" fill="#fff"/><rect x="1" y="1.8" width="8" height="12.5" fill="none" stroke="#fff" stroke-width="1.5"/><rect x="3" y="8" width="4" height="5" fill="#fff"/></svg>
<svg class="a" style="left:869px;top:742px" width="17" height="13"><g fill="#fff"><rect x="0" y="11" width="2" height="2"/><rect x="3" y="9" width="2" height="4"/><rect x="6" y="7" width="2" height="6"/><rect x="9" y="4.5" width="2" height="8.5"/><rect x="12" y="2" width="2" height="11"/><rect x="15" y="0" width="1.5" height="13"/></g></svg>
<svg class="a" style="left:895px;top:743px" width="13" height="13"><path d="M0.5,4 H3 L7,0.5 V12.5 L3,9 H0.5 Z" fill="#fff"/><path d="M9.5,3.5 Q12,6.5 9.5,9.5" stroke="#fff" stroke-width="1" fill="none"/></svg>
<div class="a" style="left:924px;top:740px;font-size:13px;color:#fff;letter-spacing:-0.6px">SLV</div>
<div class="a" style="left:971px;top:733px;font-size:13px;color:#fff;letter-spacing:-0.9px">10:44</div>
<div class="a" style="left:960px;top:749px;font-size:13px;color:#fff;letter-spacing:-1.1px">1.12.2015</div>
</div></body></html>
